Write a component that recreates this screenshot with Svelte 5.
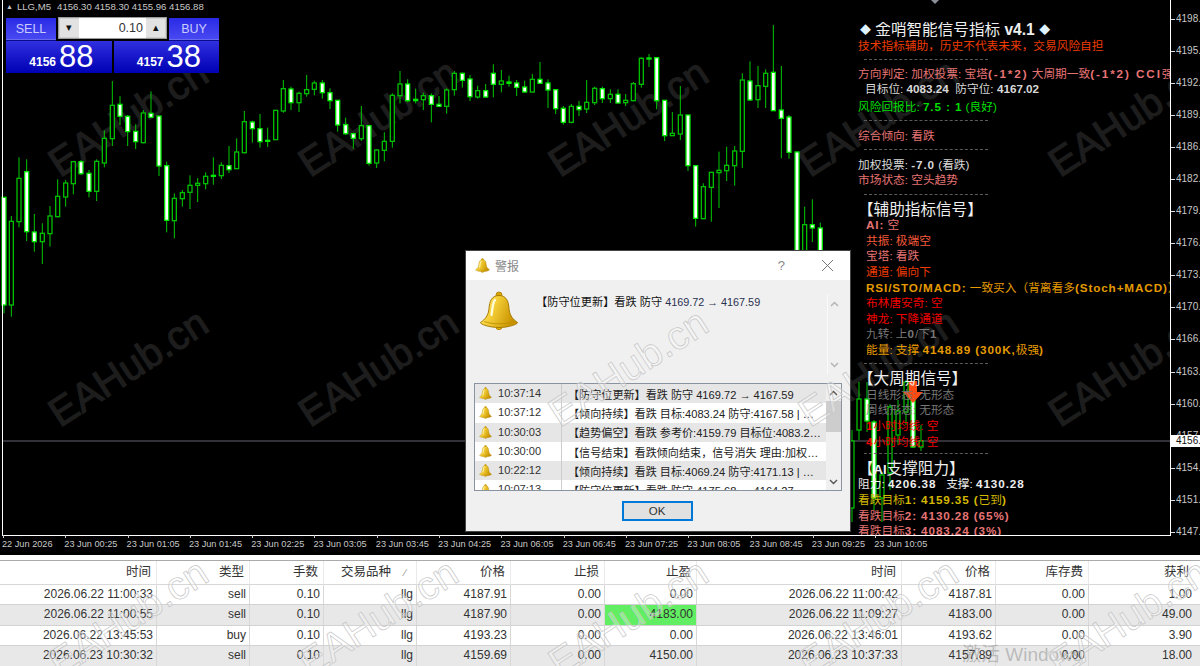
<script>
  const A = [[34,468,484,735,770,0],[12,412,412,735,760,1],[57,292,355,485,502,0],[80,298,335,515,543,1],[103,462,516,545,575,1],[127,490,520,545,612,0],[150,438,468,521,560,0],[173,358,409,470,472,0],[197,360,369,411,440,0],[220,305,305,371,403,0],[243,300,305,341,345,1],[267,330,340,394,412,1],[290,298,304,394,423,0],[313,211,235,309,322,0],[337,63,136,236,258,0],[360,108,133,169,195,1],[383,165,169,215,258,1],[407,193,214,245,267,1],[430,150,159,248,250,0],[453,94,160,172,172,1],[477,168,168,318,348,1],[500,305,317,481,517,1],[523,400,415,482,535,0],[547,390,398,416,440,0],[570,346,376,397,447,0],[593,354,370,376,426,0],[617,337,349,371,388,0],[640,292,346,349,374,2],[664,307,316,347,357,0],[687,258,317,329,339,1],[710,235,276,326,327,0],[733,153,185,278,280,0],[757,182,186,206,248,1],[780,162,206,245,263,1],[803,203,241,244,261,2],[827,150,151,239,240,0],[850,60,86,153,158,0],[873,80,87,128,150,1],[897,95,100,128,156,0],[920,45,89,101,110,0],[943,62,69,88,106,0],[967,60,69,98,116,1],[990,85,98,122,147,1],[1013,120,121,195,215,1],[1037,173,194,221,225,1],[1060,218,221,235,266,1],[1084,138,197,236,243,0],[1107,197,197,310,317,1],[1130,268,270,309,324,0],[1153,217,244,271,304,0],[1177,100,106,244,263,0],[1200,33,72,107,130,0],[1223,58,72,122,127,1],[1247,86,118,122,130,2],[1270,98,107,119,150,0],[1294,100,107,133,187,1],[1317,108,133,139,141,1],[1340,85,90,139,161,0],[1363,33,40,89,107,0],[1387,38,40,61,83,1]];
  const B = [[0,165,177,230,243,1],[23,197,212,231,236,0],[47,192,212,231,233,1],[70,133,160,193,232,1],[94,150,183,193,217,0],[117,167,186,190,200,2],[140,180,189,202,228,1],[164,182,201,216,218,1],[187,162,178,216,218,0],[210,126,178,190,192,1],[234,178,189,210,264,1],[257,209,209,266,282,1],[280,258,265,307,314,1],[304,252,259,307,310,0],[327,243,259,269,288,1],[350,180,247,267,279,0],[374,200,205,248,255,0],[397,200,206,236,249,1],[421,208,223,236,249,0],[444,208,223,249,250,1],[467,222,241,248,258,0],[490,186,191,242,244,0],[514,112,115,193,203,0],[537,102,114,116,141,2],[560,112,113,242,268,1],[584,240,241,347,363,1],[607,276,340,347,348,0],[631,198,285,342,360,0],[654,285,285,437,453,1],[677,437,437,595,620,1],[700,490,500,596,597,0],[724,456,457,502,605,0],[747,395,451,458,564,0],[770,380,436,452,483,0],[794,378,393,437,497,0],[817,160,180,394,444,0],[840,124,183,240,243,1],[864,138,197,239,264,0],[887,148,160,199,264,0],[910,15,157,272,272,1],[934,138,270,295,415,1],[957,285,291,397,416,1],[981,395,396,800,820,1],[1004,560,614,800,820,0],[1027,538,614,624,666,1],[1051,608,624,800,820,1]];
  const C = [[852,430,441,508,522,0],[859,382,399,430,440,0],[867,382,399,421,432,1],[874,420,422,498,510,1],[882,472,475,498,522,0],[890,404,407,473,490,0],[898,400,411,435,445,0],[906,380,382,412,425,0],[913,385,398,447,448,1],[921,425,441,447,451,0]];
  const candles = [
    ...A.map(([x,a,b,c,d,t]) => [x/3, 60+a/3, 60+b/3, 60+c/3, 60+d/3, t]),
    ...B.map(([x,a,b,c,d,t]) => [470+x/3, 20+a/3, 20+b/3, 20+c/3, 20+d/3, t]),
    ...C
  ];
  const marks = [];
  for (const y of [178, 428, 678]) for (const x of [60, 310, 560, 810, 1060]) marks.push([x, y]);
  const prices = ['4198.29','4195.50','4192.28','4189.10','4186.03','4182.85','4179.67','4176.49','4173.28','4170.10','4166.92','4163.74','4160.55','4157.37','4154.20','4151.02','4147.84'];
  const times = ['22 Jun 2026','23 Jun 00:25','23 Jun 01:05','23 Jun 01:45','23 Jun 02:25','23 Jun 03:05','23 Jun 03:45','23 Jun 04:25','23 Jun 06:05','23 Jun 06:45','23 Jun 07:25','23 Jun 08:05','23 Jun 08:45','23 Jun 09:25','23 Jun 10:05'];
  const heads = ['时间','类型','手数','交易品种','价格','止损','止盈','时间','价格','库存费','获利'];
  const rows = [
    ['2026.06.22 11:00:33','sell','0.10','llg','4187.91','0.00','0.00','2026.06.22 11:00:42','4187.81','0.00','1.00'],
    ['2026.06.22 11:00:55','sell','0.10','llg','4187.90','0.00','4183.00','2026.06.22 11:09:27','4183.00','0.00','49.00'],
    ['2026.06.22 13:45:53','buy','0.10','llg','4193.23','0.00','0.00','2026.06.22 13:46:01','4193.62','0.00','3.90'],
    ['2026.06.23 10:30:32','sell','0.10','llg','4159.69','0.00','4150.00','2026.06.23 10:37:33','4157.89','0.00','18.00']
  ];
  const alerts = [
    ['10:37:14','【防守位更新】看跌 防守 4169.72 → 4167.59'],
    ['10:37:12','【倾向持续】看跌 目标:4083.24 防守:4167.58 | 风险回报比'],
    ['10:30:03','【趋势偏空】看跌 参考价:4159.79 目标位:4083.24 防守位'],
    ['10:30:00','【信号结束】看跌倾向结束，信号消失 理由:加权投票转为中性'],
    ['10:22:12','【倾向持续】看跌 目标:4069.24 防守:4171.13 | 风险回报比'],
    ['10:07:13','【防守位更新】看跌 防守 4175.68 → 4164.27']
  ];
</script>

<svg class="defs" width="0" height="0" aria-hidden="true">
  <defs>
    <linearGradient id="bellFill" x1="0" y1="0" x2="1" y2="0.35">
      <stop offset="0" stop-color="#fff7b0" />
      <stop offset="0.4" stop-color="#f7d23c" />
      <stop offset="1" stop-color="#c99400" />
    </linearGradient>
    <symbol id="bell" viewBox="0 0 40 40">
      <circle cx="20" cy="4" r="3" fill="#d9a400" stroke="#a87c00" stroke-width="0.8" />
      <circle cx="20" cy="35.5" r="3.2" fill="#e2b000" stroke="#a87c00" stroke-width="0.8" />
      <path d="M20 4.5C12.5 4.5 10.5 10.5 10 17.5C9.5 24.5 6 28.5 1.5 31.5C1 33 10 36.5 20 36.5S39 33 38.5 31.5C34 28.5 30.5 24.5 30 17.5C29.5 10.5 27.5 4.5 20 4.5Z" fill="url(#bellFill)" stroke="#a87c00" stroke-width="1" />
      <path d="M5 30.5C13 33.5 27 33.5 35 30.5" fill="none" stroke="#b98b00" stroke-width="0.8" />
      <path d="M16 9C13.5 12 13.5 18 12.5 24" fill="none" stroke="#fffde0" stroke-width="2.2" stroke-linecap="round" />
    </symbol>
  </defs>
</svg>

<div class="app">
  <section class="terminal">
    <div class="plot">
      <svg class="chart" width="1171" height="536" viewBox="0 0 1171 536">
        {#each marks as [x, y]}
          <text class="mark" {x} {y} transform="rotate(-33 {x} {y})">EAHub.cn</text>
        {/each}
        <line x1="3" y1="441" x2="1170" y2="441" stroke="#62626e" stroke-width="1" />
        {#each candles as [x, a, b, c, d, t]}
          <line x1={x} x2={x} y1={a} y2={d} stroke="#00c800" stroke-width="1" />
          <rect x={x - 2} y={b} width="4" height={Math.max(c - b, 1)}
            fill={t === 1 ? '#fff' : t === 2 ? '#00e000' : '#000'}
            stroke={t === 0 ? '#00c000' : '#00e800'} stroke-width="1.3" />
        {/each}
        <polygon points="931,0 939,0 935,4" fill="#8a8f98" />
        <line x1="2.5" y1="0" x2="2.5" y2="535" stroke="#fff" />
        <line x1="2" y1="535.5" x2="1171" y2="535.5" stroke="#fff" />
        <line x1="1170.5" y1="0" x2="1170.5" y2="536" stroke="#fff" />
        <path d="M909 381H917V392H923L913 403L903 392H909Z" fill="#ff4a12" />
      </svg>
      <div class="axis">
        {#each prices as p}<div class="price">{p}</div>{/each}
        <div class="last">4156.88</div>
      </div>
    </div>
    <div class="times">
      {#each times as t}<div class="time">{t}</div>{/each}
    </div>

    <div class="symbol"><span class="tri">▲</span>LLG,M5<span class="ohlc">4156.30 4158.30 4155.96 4156.88</span></div>

    <div class="trade">
      <div class="trade-top">
        <div class="side">SELL</div>
        <div class="lot">
          <span class="step">▾</span>
          <span class="lotv">0.10</span>
          <span class="step">▴</span>
        </div>
        <div class="side">BUY</div>
      </div>
      <div class="trade-bottom">
        <div class="quote"><span class="q1">4156</span><span class="q2">88</span></div>
        <div class="quote"><span class="q1">4157</span><span class="q2">38</span></div>
      </div>
    </div>

    <div class="info">
      <div class="l big title"><span class="dia">◆</span> 金哨智能信号指标 <b>v4.1</b> <span class="dia">◆</span></div>
      <div class="l orangered">技术指标辅助，历史不代表未来，交易风险自担</div>
      <div class="sep"></div>
      <div class="l coral tight">方向判定: 加权投票: 宝塔<b class="w">(-1*2)</b> 大周期一致<b class="w">(-1*2) CCI</b>强空</div>
      <div class="l grey2 tight ind0 plain">目标位: <b>4083.24</b> &nbsp;防守位: <b>4167.02</b></div>
      <div class="l lime after">风险回报比: <b>7.5 : 1</b> (良好)</div>
      <div class="sep sm"></div>
      <div class="l coral">综合倾向: 看跌</div>
      <div class="sep"></div>
      <div class="l grey2">加权投票: <b>-7.0</b> (看跌)</div>
      <div class="l coral">市场状态: 空头趋势</div>
      <div class="sep"></div>
      <div class="l big head">【辅助指标信号】</div>
      <div class="l coral ind"><b>AI:</b> 空</div>
      <div class="l tomato ind">共振: 极端空</div>
      <div class="l coral ind">宝塔: 看跌</div>
      <div class="l orangered ind">通道: 偏向下</div>
      <div class="l orange ind"><b>RSI/STO/MACD:</b> 一致买入（背离看多<b>(Stoch+MACD)</b>）</div>
      <div class="l red ind">布林唐安奇: 空</div>
      <div class="l red ind">神龙: 下降通道</div>
      <div class="l gray ind">九转: 上<b>0</b>/下<b>1</b></div>
      <div class="l orange ind">能量: 支撑 <b>4148.89 (300K,</b>极强<b>)</b></div>
      <div class="sep"></div>
      <div class="l big head">【大周期信号】</div>
      <div class="l gray ind">日线形态: 无形态</div>
      <div class="l gray ind">周线形态: 无形态</div>
      <div class="l red ind"><b>1</b>小时均线: 空</div>
      <div class="l red ind"><b>4</b>小时均线: 空</div>
      <div class="sep xs"></div>
      <div class="l big head">【<b class="ai">AI</b>支撑阻力】</div>
      <div class="l white">阻力: <b>4206.38</b> &nbsp; 支撑: <b>4130.28</b></div>
      <div class="l gold">看跌目标<b>1: 4159.35 (</b>已到<b>)</b></div>
      <div class="l coral">看跌目标<b>2: 4130.28 (65%)</b></div>
      <div class="l coral">看跌目标<b>3: 4083.24 (3%)</b></div>
    </div>

    <div class="dialog">
      <header class="dlg-title">
        <svg class="bell-sm" width="15" height="15"><use href="#bell" /></svg>
        <span class="dlg-name">警报</span>
        <span class="help">?</span>
        <svg class="close" width="13" height="13" viewBox="0 0 13 13"><path d="M1 1L12 12M12 1L1 12" stroke="#777" stroke-width="1" fill="none" /></svg>
      </header>
      <div class="dlg-body">
        <div class="msg-row">
          <svg class="bell-lg" width="40" height="40"><use href="#bell" /></svg>
          <div class="msg">【防守位更新】看跌 防守 <span class="num">4169.72 → 4167.59</span></div>
          <div class="msg-scroll">
            <svg width="9" height="6" viewBox="0 0 9 6"><path d="M1 5L4.5 1.5L8 5" fill="none" stroke="#b5b5b5" stroke-width="1.5" /></svg>
            <svg width="9" height="6" viewBox="0 0 9 6"><path d="M1 1L4.5 4.5L8 1" fill="none" stroke="#b5b5b5" stroke-width="1.5" /></svg>
          </div>
        </div>
        <div class="list">
          <div class="list-rows">
            {#each alerts as [t, m]}
              <div class="alert">
                <svg class="bell-xs" width="13" height="13"><use href="#bell" /></svg>
                <span class="at">{t}</span>
                <span class="am">{m}</span>
              </div>
            {/each}
          </div>
          <div class="list-scroll">
            <svg width="9" height="6" viewBox="0 0 9 6"><path d="M1 5L4.5 1.5L8 5" fill="none" stroke="#555" stroke-width="1.4" /></svg>
            <div class="thumb"></div>
            <svg class="down" width="9" height="6" viewBox="0 0 9 6"><path d="M1 1L4.5 4.5L8 1" fill="none" stroke="#555" stroke-width="1.4" /></svg>
          </div>
        </div>
        <div class="dlg-foot"><button class="ok">OK</button></div>
      </div>
    </div>
  </section>

  <section class="table">
    <div class="thead">
      {#each heads as h, i}
        <div class="th">{h}{#if i === 3}<i class="sort">∕</i>{/if}</div>
      {/each}
    </div>
    {#each rows as r, ri}
      <div class="tr" class:alt={ri % 2 === 1}>
        {#each r as c, ci}
          <div class="td" class:hit={ri === 1 && ci === 6}>{c}</div>
        {/each}
      </div>
    {/each}
    <div class="activate">激活 Windows</div>
  </section>

  <svg class="over" width="1200" height="666" viewBox="0 0 1200 666" aria-hidden="true">
    <defs>
      <clipPath id="lightAreas">
        <rect x="466" y="281" width="384" height="250" />
        <rect x="0" y="556" width="1200" height="110" />
      </clipPath>
    </defs>
    <g clip-path="url(#lightAreas)">
      {#each marks as [x, y]}
        <text class="mark-o" {x} {y} transform="rotate(-33 {x} {y})">EAHub.cn</text>
      {/each}
    </g>
  </svg>
</div>

<style>
  :global(body) { margin: 0; background: #fff; overflow: hidden; }
  .defs { position: absolute; }
  .app {
    position: relative; width: 1200px; height: 666px; overflow: hidden;
    display: flex; flex-direction: column;
    font-family: "Liberation Sans", "Noto Sans CJK SC", sans-serif;
  }
  .terminal { position: relative; height: 555px; background: #000; flex: none; overflow: hidden; }
  .plot { display: flex; height: 536px; }
  .chart { flex: none; display: block; }
  .mark { font: 400 40px "Liberation Sans", sans-serif; fill: #1d1d1d; stroke: #1d1d1d; stroke-width: 1.2px; }
  .axis { position: relative; flex: 1; overflow: hidden; padding-top: 13px; }
  .price {
    height: 32.06px; line-height: 12px; padding-left: 5px;
    color: #c8c8c8; font-size: 10px; white-space: nowrap; position: relative;
  }
  .price::before { content: ""; position: absolute; left: 0; top: 6px; width: 4px; height: 1px; background: #ddd; }
  .last {
    position: absolute; left: 0; top: 435px; width: 29px; height: 12px; line-height: 12px;
    background: #fff; color: #111; font-size: 10px; padding-left: 5px; box-sizing: border-box; overflow: hidden;
  }
  .times { display: flex; padding-left: 2px; height: 19px; }
  .time {
    width: 62.3px; flex: none; color: #c8c8c8; font-size: 9.2px; line-height: 17px; white-space: nowrap; position: relative;
  }
  .time::before { content: ""; position: absolute; left: 1px; top: -1px; width: 1px; height: 3px; background: #ccc; }

  .symbol { position: absolute; left: 6px; top: 1px; color: #c8c8c8; font-size: 9.6px; line-height: 12px; white-space: nowrap; }
  .tri { font-size: 7px; margin-right: 4px; vertical-align: 1px; }
  .ohlc { margin-left: 6px; }

  .trade { position: absolute; left: 6px; top: 17px; width: 213px; }
  .trade-top { display: flex; gap: 2px; height: 24px; }
  .side {
    width: 50px; height: 23px; margin-top: 1px; box-sizing: border-box; text-align: center; line-height: 22px; font-size: 12.5px;
    color: #c9ccff; background: linear-gradient(#2a2ae6, #4a4af2); border-bottom: 1px solid #0a0a8a; box-shadow: inset 0 -1px 0 #6a6af0;
  }
  .lot {
    flex: 1; display: flex; height: 22px; box-sizing: border-box; border: 1px solid #9c9c9c;
    background: #e2e2e2; box-shadow: inset 0 0 0 1px #cfcfcf;
  }
  .step { width: 20px; text-align: center; color: #111; font-size: 11px; line-height: 19px; }
  .lotv { flex: 1; background: #fff; color: #333; font-size: 12.5px; line-height: 20px; text-align: right; padding-right: 3px; }
  .trade-bottom { display: flex; gap: 2px; }
  .quote {
    flex: 1; height: 32px; display: flex; justify-content: flex-end; align-items: flex-end; padding-right: 18px;
    background: linear-gradient(#3030e0, #0000b4); color: #fff;
  }
  .q1 { font-size: 12px; font-weight: 700; line-height: 13px; margin: 0 3px 4px 0; }
  .q2 { font-size: 31px; line-height: 32px; letter-spacing: 0; }

  .info {
    position: absolute; left: 858px; top: 22px; width: 312px; height: 513px; overflow: hidden;
    font-size: 11.7px; color: #ddd;
  }
  .l { height: 15.6px; line-height: 15.6px; white-space: nowrap; }
  .l b { letter-spacing: 0.9px; }
  .l .w { letter-spacing: 1.9px; }
  .l.plain b, .big b { letter-spacing: 0; }
  .sep { height: 13.6px; margin: 0 0 0 6px; width: 124px; box-sizing: border-box; border-bottom: 1px dashed #5a5a5a; transform: translateY(-7px); }
  .sep.sm { height: 12.6px; }
  .sep.xs { height: 11.6px; }
  .big { font-size: 15.6px; color: #eee; }
  .title { margin-left: 2px; height: 16px; line-height: 16px; }
  .dia { color: #dff4ff; font-size: 11px; vertical-align: 1px; }
  .head { margin-left: 0; }
  .ai { font-size: 13px; }
  .tight { height: 14.4px; line-height: 14.4px; }
  .after { margin-top: 3.5px; }
  .ind { padding-left: 8px; }
  .ind0 { padding-left: 7px; }
  .orangered { color: #ee3c00; }
  .coral { color: #e67474; }
  .lime { color: #00df00; }
  .tomato { color: #f55a3c; }
  .orange { color: #e49a00; }
  .red { color: #f00000; }
  .gray { color: #777; }
  .grey2 { color: #d8d8d8; }
  .white { color: #eee; }
  .gold { color: #d4b800; }

  .dialog {
    position: absolute; left: 466px; top: 251px; width: 384px; height: 280px;
    display: flex; flex-direction: column; background: #f0f0f0; box-shadow: 0 0 0 1px #444;
    color: #222;
  }
  .dlg-title { height: 29px; background: #fff; display: flex; align-items: center; padding-left: 9px; flex: none; }
  .dlg-name { margin-left: 5px; font-size: 12px; color: #888; }
  .help { margin-left: auto; color: #888; font-size: 13px; }
  .close { margin: 0 16px 0 36px; }
  .dlg-body { flex: 1; display: flex; flex-direction: column; padding: 0 8px; }
  .msg-row { display: flex; height: 103px; position: relative; }
  .bell-lg { margin: 11px 0 0 5px; flex: none; }
  .msg { margin: 15px 0 0 17px; font-size: 11.2px; line-height: 15px; color: #111; white-space: nowrap; flex: 1; }
  .num { color: #2a3050; font-size: 10.8px; }
  .msg-scroll {
    width: 14px; height: 80px; margin: 14px 1px 0 0; border-left: 1px solid #fafafa; display: flex; flex-direction: column;
    justify-content: space-between; align-items: center; padding: 7px 0 6px; box-sizing: border-box; flex: none;
  }
  .list { height: 108px; display: flex; border: 1px solid #8a93a0; box-sizing: border-box; background: #fff; flex: none; }
  .list-rows { flex: 1; overflow: hidden; }
  .alert { height: 19.3px; display: flex; align-items: center; background: #fff; font-size: 11.1px; color: #222; white-space: nowrap; }
  .alert:nth-child(odd) { background: #e6e6e6; }
  .bell-xs { margin-left: 4px; flex: none; }
  .at { width: 63px; margin-left: 6px; flex: none; color: #333; border-right: 1px solid #ccc; height: 100%; line-height: 19px; }
  .am { margin-left: 6px; width: 256px; overflow: hidden; text-overflow: ellipsis; }
  .list-scroll {
    width: 15px; flex: none; background: #f0f0f0; display: flex; flex-direction: column; align-items: center; padding-top: 6px; box-sizing: border-box;
  }
  .thumb { width: 100%; height: 31px; background: #cdcdcd; margin-top: 5px; }
  .down { margin-top: auto; margin-bottom: 5px; }
  .dlg-foot { flex: 1; display: flex; justify-content: center; align-items: flex-start; padding: 10px 0 0 0; }
  .ok {
    width: 71px; height: 20px; border: 2px solid #0078d7; background: #e1e1e1; color: #333; padding: 0;
    font: 11.5px "Liberation Sans", sans-serif; margin-left: -2px;
  }

  .table { position: relative; flex: 1; background: #fff; padding-top: 5px; box-sizing: border-box; color: #333; font-size: 12px; }
  .thead, .tr {
    display: grid;
    grid-template-columns: 157px 93px 74px 93px 94px 94px 92px 205px 94px 93px 105px;
  }
  .thead { height: 25px; border-top: 1px solid #aaa; box-sizing: border-box; }
  .th { text-align: right; padding-right: 5px; line-height: 23px; border-right: 1px solid #eaeaea; border-bottom: 1px solid #d8d8d8; position: relative; font-size: 12.5px; }
  .th:nth-child(4) { padding-right: 25px; }
  .th:last-child { border-right: 0; }
  .sort { position: absolute; right: 10px; top: 0; font-size: 10px; color: #888; font-style: normal; }
  .tr { height: 20.4px; background: #fff; border-bottom: 1px solid #d2d2d2; box-sizing: border-box; }
  .tr.alt { background: #e8e8e8; }
  .td { text-align: right; padding-right: 3px; line-height: 19px; border-right: 1px solid #d8d8d8; white-space: nowrap; }
  .td:last-child { border-right: 0; padding-right: 2px; }
  .td.hit { background: #62ee62; }
  .activate { position: absolute; left: 962px; top: 88px; font-size: 19px; line-height: 24px; color: rgba(130,130,130,.45); white-space: nowrap; }

  .over { position: absolute; left: 0; top: 0; pointer-events: none; }
  .mark-o { font: 400 40px "Liberation Sans", sans-serif; fill: rgba(255,255,255,.3); stroke: #c6c6c6; stroke-width: 0.7px; }
</style>
